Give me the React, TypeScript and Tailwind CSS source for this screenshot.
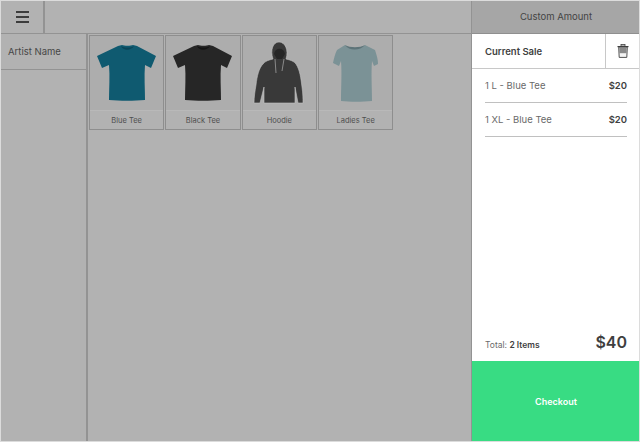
function Tee({ fill, shade }: { fill: string; shade: string }) {
  return (
    <svg viewBox="0 0 62 58" className="h-[58px] w-[62px]">
      <path
        d="M26 1 C28 2 35 2 37 1 L41 2 L60 12 L55 24 L49 21 C48 32 49 45 49 56 C38 57 24 57 13 56 C13 45 14 32 13 21 L6 24 L1 12 L22 2 Z"
        fill={fill}
      />
      <path d="M25 2 C27 7 35 7 38 2 C35 4 28 4 25 2 Z" fill={shade} />
    </svg>
  );
}

function Hoodie() {
  return (
    <svg viewBox="0 0 52 64" className="h-[64px] w-[52px]">
      <path
        d="M20 18 C17 9 20 1 26 1 C32 1 36 9 33 18 C37 19 41 20 43 23 C47 29 48 38 49 46 C50 53 50 58 50 62 L45 62 L42 46 L42 62 L11 62 L11 46 L7 62 L1 62 C1 56 2 50 3 44 C4 35 6 27 10 23 C12 20 16 19 20 18 Z"
        fill="#393939"
        stroke="#c2c2c2"
        strokeWidth="0.6"
      />
      <path d="M21 13 C22 6 31 6 32 13 L29 18 L24 18 Z" fill="#262626" />
      <path d="M22 18 L23 32 M31 18 L29 30" stroke="#8a8a8a" strokeWidth="1" fill="none" />
    </svg>
  );
}

function LadiesTee() {
  return (
    <svg viewBox="0 0 47 60" className="h-[60px] w-[47px]">
      <path
        d="M13 2 C17 6 28 6 33 2 L43 7 C45 13 46 17 46 21 L42 23 L40 18 C39 30 40 46 40 58 C30 59 18 59 9 58 C9 46 10 30 9 18 L7 23 L1 20 C2 15 3 11 5 7 Z"
        fill="#7b9296"
      />
      <path d="M13 2 C17 8 28 8 33 2 C28 5 18 5 13 2 Z" fill="#5d7378" />
    </svg>
  );
}

function TrashIcon() {
  return (
    <svg viewBox="0 0 12 14" className="h-[14px] w-[12px]">
      <rect x="4" y="0.5" width="4" height="1.5" fill="none" stroke="#3f3f3f" strokeWidth="0.8" />
      <rect x="0.5" y="2" width="11" height="1.2" fill="#3f3f3f" />
      <path d="M1.7 3.2 L2.2 13.4 L9.8 13.4 L10.3 3.2 Z" fill="#f4f4f4" stroke="#3f3f3f" strokeWidth="0.9" />
      <rect x="2.3" y="4" width="7.4" height="5.2" fill="#8a8a8a" />
    </svg>
  );
}

const products = [
  { name: "Blue Tee", art: <Tee fill="#0f5a70" shade="#0a4558" /> },
  { name: "Black Tee", art: <Tee fill="#262626" shade="#141414" /> },
  { name: "Hoodie", art: <Hoodie /> },
  { name: "Ladies Tee", art: <LadiesTee /> },
];

const lines = ["1 L - Blue Tee", "1 XL - Blue Tee"];

export default function App() {
  return (
    <div
      className="flex h-[442px] w-[640px] overflow-hidden border border-[#dcdcdc] bg-[#b2b2b2] text-[#3f3f3f]"
      style={{ fontFamily: "Inter, 'Liberation Sans', sans-serif" }}
    >
      <div className="flex min-w-0 flex-1 flex-col">
        {/* Top bar */}
        <div className="flex h-[33px] border-b border-[#939393]">
          <div className="flex w-[44px] items-center justify-center border-r-2 border-[#939393]">
            <div className="flex w-[13px] flex-col gap-[3px]">
              <div className="h-[2px] bg-[#3c3c3c]" />
              <div className="h-[2px] bg-[#3c3c3c]" />
              <div className="h-[2px] bg-[#3c3c3c]" />
            </div>
          </div>
        </div>

        <div className="flex flex-1">
          {/* Artists */}
          <div className="w-[87px] border-r-2 border-[#939393]">
            <div className="flex h-[36px] items-center border-b border-[#939393] pl-[7px] pt-[2px] text-[9.5px] text-[#474747]">
              Artist Name
            </div>
          </div>

          {/* Products */}
          <div className="flex flex-1 items-start gap-px pl-px pt-px">
            {products.map((p) => (
              <div key={p.name} className="w-[75.33px] border border-[#8e8e8e]">
                <div className="flex h-[74px] items-center justify-center bg-[#adadad]">{p.art}</div>
                <div className="flex h-[19px] items-center justify-center border-t border-[#b9b9b9] pt-[2px] text-[7.5px] text-[#4f4f4f]">
                  {p.name}
                </div>
              </div>
            ))}
          </div>
        </div>
      </div>

      {/* Sale panel */}
      <div className="flex w-[168px] flex-col border-l border-[#939393]">
        <div className="flex h-[33px] items-center justify-center border-b border-[#8f8f8f] bg-[#a6a6a6] pl-px pt-px text-[9.5px] text-[#444444]">
          Custom Amount
        </div>
        <div className="flex flex-1 flex-col bg-white">
          <div className="flex h-[35px] border-b border-[#c8c8c8]">
            <div className="flex flex-1 items-center pl-[13px] pt-[2px] text-[9.5px] font-semibold text-[#3f3f3f]">
              Current Sale
            </div>
            <div className="flex w-[34px] items-center justify-center border-l border-[#c8c8c8]">
              <TrashIcon />
            </div>
          </div>
          {lines.map((line) => (
            <div
              key={line}
              className="ml-[13px] mr-[12px] flex h-[34px] items-center justify-between border-b border-[#c0c0c0] pt-[2px] text-[9.5px] text-[#6a6a6a]"
            >
              <span>{line}</span>
              <span className="font-semibold text-[#3f3f3f]">$20</span>
            </div>
          ))}
          <div className="mb-[9px] ml-[13px] mr-[12px] mt-auto flex items-baseline justify-between">
            <span className="text-[8.5px] text-[#6a6a6a]">
              Total: <span className="font-semibold text-[#3f3f3f]">2 Items</span>
            </span>
            <span className="text-[16px] font-semibold leading-[20px] text-[#3f3f3f]">$40</span>
          </div>
          <div className="flex h-[80px] items-center justify-center bg-[#38dc83] pl-px pt-[2px] text-[9px] font-semibold text-white">
            Checkout
          </div>
        </div>
      </div>
    </div>
  );
}
